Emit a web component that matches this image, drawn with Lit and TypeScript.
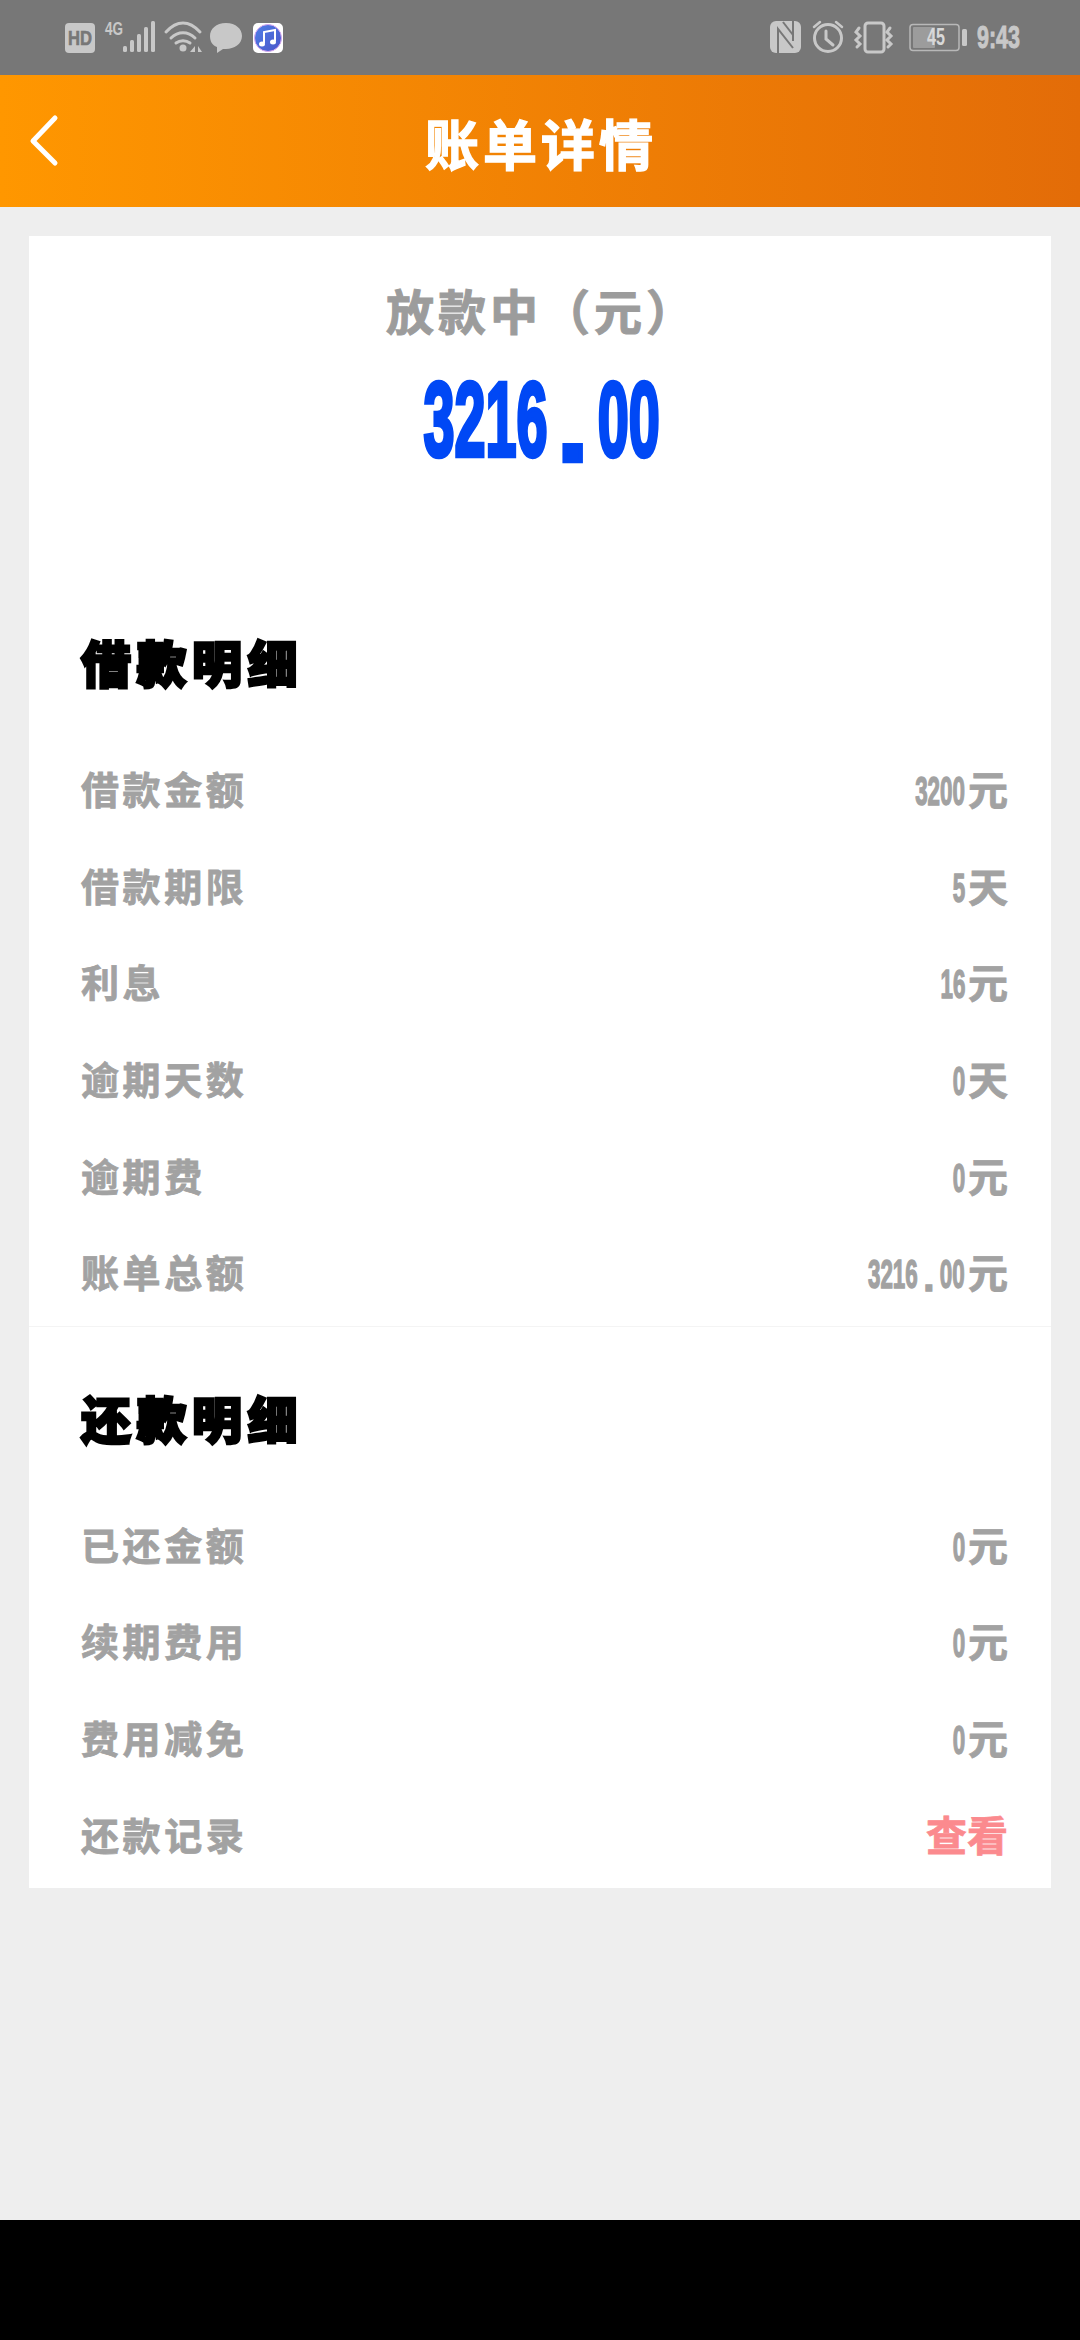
import { html, css, LitElement, svg } from "lit";
import { customElement } from "lit/decorators.js";

const loanRows = [
  ["借款金额", "3200", "元"],
  ["借款期限", "5", "天"],
  ["利息", "16", "元"],
  ["逾期天数", "0", "天"],
  ["逾期费", "0", "元"],
  ["账单总额", "3216.00", "元"],
];

const repayRows = [
  ["已还金额", "0", "元"],
  ["续期费用", "0", "元"],
  ["费用减免", "0", "元"],
];

const statusLeft = svg`
  <rect x="65" y="23" width="30" height="30" rx="4" fill="#c8c8c8"/>
  <text x="80" y="45" text-anchor="middle" font-family="Liberation Sans" font-weight="700" font-size="20" fill="#777" stroke="#777" stroke-width="0.6" textLength="24" lengthAdjust="spacingAndGlyphs">HD</text>
  <text x="105" y="35" font-family="Liberation Sans" font-weight="700" font-size="18" fill="#c8c8c8" textLength="18" lengthAdjust="spacingAndGlyphs">4G</text>
  <g fill="#c8c8c8">
    <rect x="123" y="46" width="4" height="6" rx="1.5"/>
    <rect x="130" y="40" width="4" height="12" rx="1.5"/>
    <rect x="137" y="34" width="4" height="18" rx="1.5"/>
    <rect x="144" y="27" width="4" height="25" rx="1.5"/>
    <rect x="151" y="21" width="4" height="31" rx="1.5"/>
  </g>
  <g fill="none" stroke="#c8c8c8" stroke-width="3" stroke-linecap="round">
    <path d="M166 32 C177 20 189 20 200 32"/>
    <path d="M171 38 C178 31 188 31 195 38"/>
    <path d="M176 43 C180 40 186 40 190 43"/>
  </g>
  <circle cx="183" cy="48" r="3.5" fill="#c8c8c8"/>
  <path d="M195 46 V52 H190 Z M198 46 V52 H202 Z" fill="#c8c8c8"/>
  <path d="M226 23 C236 23 242 29 242 36 C242 44 234 49 226 49 L223 49 L217 53 L217 47 C212 45 210 41 210 36 C210 29 216 23 226 23 Z" fill="#c8c8c8"/>
  <rect x="253" y="23" width="30" height="30" rx="5" fill="#fff"/>
  <defs>
    <linearGradient id="music" x1="0" y1="0" x2="1" y2="1">
      <stop offset="0" stop-color="#4f7fe8"/>
      <stop offset="1" stop-color="#4a55c8"/>
    </linearGradient>
  </defs>
  <circle cx="268" cy="38" r="13.5" fill="url(#music)" stroke="#d9a8f0" stroke-width="1"/>
  <path d="M264 43 V32 L275 30 V41" fill="none" stroke="#fff" stroke-width="2"/>
  <ellipse cx="262" cy="44" rx="3" ry="2.5" fill="#fff"/>
  <ellipse cx="273" cy="42" rx="3" ry="2.5" fill="#fff"/>
`;

const statusRight = svg`
  <rect x="770" y="21" width="31" height="32" rx="6" fill="#c8c8c8"/>
  <g fill="none" stroke="#777" stroke-width="2">
    <path d="M778 53 V29 L793 48"/>
    <path d="M793 21 V41"/>
    <path d="M783 22 L793 35"/>
  </g>
  <g fill="none" stroke="#c8c8c8" stroke-linecap="round">
    <circle cx="828" cy="38" r="13.5" stroke-width="3"/>
    <path d="M826 31 V39 L833 45" stroke-width="3"/>
    <path d="M814 27 L820 22 M842 27 L836 22" stroke-width="2.5"/>
    <rect x="865" y="23" width="19" height="29" rx="3" stroke-width="3"/>
    <path d="M859 28 L856 32 L860 36 L856 40 L860 44 L857 47" stroke-width="3"/>
    <path d="M890 28 L887 32 L891 36 L887 40 L891 44 L888 47" stroke-width="3"/>
  </g>
  <rect x="910" y="24.5" width="49" height="26" rx="3" fill="none" stroke="#b8b8b8" stroke-width="1.5"/>
  <rect x="913" y="27" width="22" height="21" rx="1" fill="#9c9c9c"/>
  <text x="936" y="45" text-anchor="middle" font-family="Liberation Sans" font-weight="700" font-size="23" fill="#d8d8d8" textLength="18" lengthAdjust="spacingAndGlyphs">45</text>
  <rect x="962" y="29" width="5" height="17" rx="1.5" fill="#c8c8c8"/>
  <text x="977" y="48" font-family="Liberation Sans" font-weight="700" font-size="32" fill="#c8c8c8" stroke="#c8c8c8" stroke-width="1" textLength="43" lengthAdjust="spacingAndGlyphs">9:43</text>
`;

@customElement("app-root")
export class AppRoot extends LitElement {
  static styles = css`
    :host {
      display: flex;
      flex-direction: column;
      width: 1080px;
      height: 2340px;
      background: #eeeeee;
      font-family: "Liberation Sans", "Noto Sans CJK SC", sans-serif;
      overflow: hidden;
    }
    .status {
      display: block;
      width: 1080px;
      height: 75px;
      background: #777777;
      flex: none;
    }
    .header {
      flex: none;
      box-sizing: border-box;
      height: 132px;
      padding: 12px 0 0 2px;
      display: flex;
      align-items: center;
      justify-content: center;
      position: relative;
      background: linear-gradient(90deg, #ff9700, #e36c08);
    }
    .back {
      position: absolute;
      left: 28px;
      top: 39px;
      width: 32px;
      height: 54px;
    }
    .title {
      color: #fff;
      font-size: 54px;
      font-weight: 700;
      letter-spacing: 4px;
      line-height: 70px;
      -webkit-text-stroke: 1.4px #fff;
    }
    .content {
      flex: 1;
      padding-top: 29px;
    }
    .card {
      margin: 0 29px;
      background: #fff;
      height: 1652px;
      display: flex;
      flex-direction: column;
    }
    .summary {
      display: flex;
      flex-direction: column;
      align-items: center;
      padding: 52px 0 0 4px;
    }
    .state {
      color: #9c9c9c;
      font-size: 48px;
      font-weight: 700;
      letter-spacing: 4px;
      line-height: 52px;
      -webkit-text-stroke: 1px #9c9c9c;
    }
    .amount {
      margin-top: 26px;
      color: #0048f5;
      font-size: 106px;
      line-height: 106px;
      font-weight: 700;
      white-space: nowrap;
      transform: scaleX(0.526);
      -webkit-text-stroke: 4.5px #0048f5;
    }
    .amount .dot {
      display: inline-block;
      line-height: 0;
      margin: 0 33px;
      vertical-align: -5px;
      transform: scaleX(2);
    }
    .section {
      display: flex;
      flex-direction: column;
      padding: 0 43px 0 52px;
    }
    .loan {
      margin-top: 159px;
      border-bottom: 1px solid #f4f4f4;
      padding-bottom: 3px;
    }
    .repay {
      margin-top: 60px;
    }
    h2 {
      margin: 0 0 42px;
      font-size: 50px;
      line-height: 70px;
      font-weight: 900;
      letter-spacing: 5.5px;
      color: #000;
      -webkit-text-stroke: 2.6px #000;
    }
    .row {
      height: 96.6px;
      display: flex;
      align-items: center;
      justify-content: space-between;
      color: #a2a2a2;
      font-size: 38px;
      font-weight: 700;
      line-height: 50px;
    }
    .label {
      letter-spacing: 3.6px;
      -webkit-text-stroke: 0.8px #a2a2a2;
    }
    .value {
      display: flex;
      align-items: baseline;
      font-size: 40px;
      -webkit-text-stroke: 0.8px #a2a2a2;
    }
    .digits {
      display: inline-block;
      white-space: nowrap;
      transform: scaleX(0.56);
      transform-origin: right center;
      margin-right: 3px;
      -webkit-text-stroke: 1.4px #a2a2a2;
    }
    .digits .dot {
      display: inline-block;
      line-height: 0;
      margin: 0 14px;
      vertical-align: -3px;
      transform: scaleX(1.8);
    }
    .link {
      color: #fb8a8e;
      font-size: 41px;
      -webkit-text-stroke: 0.8px #fb8a8e;
    }
    .foot {
      flex: none;
      height: 120px;
      background: #000;
    }
  `;

  // splits the amount so the decimal point can get its wide spacing
  private amount(text: string) {
    const [whole, cents] = text.split(".");
    if (cents === undefined) return whole;
    return html`${whole}<span class="dot">.</span>${cents}`;
  }

  private row(r: string[]) {
    return html`
      <div class="row">
        <span class="label">${r[0]}</span>
        <span class="value"><span class="digits">${this.amount(r[1])}</span>${r[2]}</span>
      </div>
    `;
  }

  override render() {
    return html`
      <svg class="status" viewBox="0 0 1080 75">${statusLeft}${statusRight}</svg>
      <div class="header">
        <svg class="back" viewBox="0 0 32 54">
          <path d="M27 4 L5 27 L27 49" fill="none" stroke="#fff" stroke-width="5" stroke-linecap="round" stroke-linejoin="round"/>
        </svg>
        <span class="title">账单详情</span>
      </div>
      <div class="content">
        <div class="card">
          <div class="summary">
            <div class="state">放款中（元）</div>
            <div class="amount">${this.amount("3216.00")}</div>
          </div>
          <div class="section loan">
            <h2>借款明细</h2>
            ${loanRows.map((r) => this.row(r))}
          </div>
          <div class="section repay">
            <h2>还款明细</h2>
            ${repayRows.map((r) => this.row(r))}
            <div class="row">
              <span class="label">还款记录</span>
              <span class="link">查看</span>
            </div>
          </div>
        </div>
      </div>
      <div class="foot"></div>
    `;
  }
}
